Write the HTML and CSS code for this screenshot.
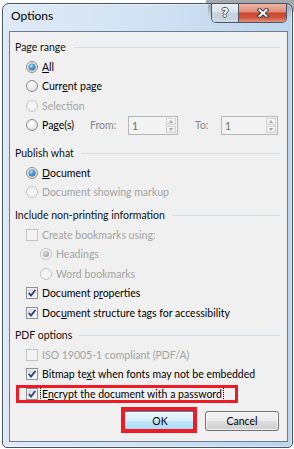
FILE: index.html
```html
<!DOCTYPE html>
<html>
<head>
<meta charset="utf-8">
<title>Options</title>
<link rel="stylesheet" href="styles.css">
</head>
<body>
<div class="window">
  <div class="titlebar">
    <span class="title">Options</span>
    <div class="caption">
      <span class="cbtn help">?</span>
      <span class="cbtn close"><svg width="12" height="10" viewBox="0 0 12 10"><path d="M2.5 2 L9.5 8 M9.5 2 L2.5 8" stroke="#3a3e44" stroke-width="4" stroke-linecap="square" fill="none"/><path d="M2.5 2 L9.5 8 M9.5 2 L2.5 8" stroke="#ffffff" stroke-width="2" stroke-linecap="square" fill="none"/></svg></span>
    </div>
  </div>
  <div class="client">
    <div class="heading h1"><span>Page range</span></div>
    <div class="row"><span class="radio on"></span><span class="lbl"><u>A</u>ll</span></div>
    <div class="row"><span class="radio"></span><span class="lbl">Curr<u>e</u>nt page</span></div>
    <div class="row dis"><span class="radio"></span><span class="lbl">Selection</span></div>
    <div class="row"><span class="radio"></span><span class="lbl pages">Pa<u>g</u>e(s)</span>
      <span class="flbl from">From:</span>
      <span class="spin s1"><span class="val">1</span><span class="arrows"><span class="arr up"></span><span class="arr dn"></span></span></span>
      <span class="flbl to">To:</span>
      <span class="spin s2"><span class="val">1</span><span class="arrows"><span class="arr up"></span><span class="arr dn"></span></span></span>
    </div>

    <div class="heading h2"><span>Publish what</span></div>
    <div class="row"><span class="radio on"></span><span class="lbl"><u>D</u>ocument</span></div>
    <div class="row dis"><span class="radio"></span><span class="lbl">Document showing markup</span></div>

    <div class="heading h3"><span>Include non-printing information</span></div>
    <div class="row dis"><span class="cb"></span><span class="lbl">Create bookmarks using:</span></div>
    <div class="row dis sub"><span class="radio on"></span><span class="lbl">Headings</span></div>
    <div class="row dis sub"><span class="radio"></span><span class="lbl">Word bookmarks</span></div>
    <div class="row"><span class="cb on"><svg width="10" height="10" viewBox="0 0 10 10"><path d="M1.8 5 L4 7.6 L8.4 2" stroke="#2c4285" stroke-width="1.9" fill="none"/></svg></span><span class="lbl">Document p<u>r</u>operties</span></div>
    <div class="row"><span class="cb on"><svg width="10" height="10" viewBox="0 0 10 10"><path d="M1.8 5 L4 7.6 L8.4 2" stroke="#2c4285" stroke-width="1.9" fill="none"/></svg></span><span class="lbl">Doc<u>u</u>ment structure tags for accessibility</span></div>

    <div class="heading h4"><span>PDF options</span></div>
    <div class="row dis"><span class="cb"></span><span class="lbl">ISO 19005-1 compliant (PDF/A)</span></div>
    <div class="row"><span class="cb on"><svg width="10" height="10" viewBox="0 0 10 10"><path d="M1.8 5 L4 7.6 L8.4 2" stroke="#2c4285" stroke-width="1.9" fill="none"/></svg></span><span class="lbl">Bitmap te<u>x</u>t when fonts may not be embedded</span></div>
    <div class="row enc"><span class="cb on"><svg width="10" height="10" viewBox="0 0 10 10"><path d="M1.8 5 L4 7.6 L8.4 2" stroke="#2c4285" stroke-width="1.9" fill="none"/></svg></span><span class="lbl focus">E<u>n</u>crypt the document with a password</span><span class="annot annot-row"></span></div>

    <div class="buttons">
      <span class="btn ok">OK<span class="annot annot-ok"></span></span>
      <span class="btn">Cancel</span>
    </div>
  </div>
</div>
</body>
</html>
```
FILE: styles.css
```css
* { box-sizing: border-box; }
html, body { margin: 0; padding: 0; }
body {
  width: 294px;
  height: 449px;
  overflow: hidden;
  background: linear-gradient(#a6aaae, #a6aaae) no-repeat 206px 0 / 88px 12px, #ffffff;
  font-family: Lato, "Liberation Sans", sans-serif;
  font-size: 10.5px;
  color: #000;
}
.window {
  margin: 3px 0 0 2px;
  width: 291px;
  height: 445px;
  border: 1px solid #46525e;
  border-radius: 7px 7px 5px 5px;
  background:
    linear-gradient(to bottom, rgba(152, 158, 164, 0.9), rgba(152, 158, 164, 0)) no-repeat right top / 84px 14px,
    linear-gradient(to right, #dfeaf6 0%, #d3e3f3 45%, #bdd4ec 100%);
  box-shadow: inset 0 0 0 1px rgba(255, 255, 255, 0.45);
  display: flex;
  flex-direction: column;
}
.titlebar {
  height: 27px;
  flex: none;
  display: flex;
  justify-content: space-between;
  align-items: flex-start;
  padding: 0 5px 0 8px;
}
.title {
  padding-top: 4px;
  font-size: 12px;
  line-height: 16px;
  color: #000;
}
.caption {
  display: flex;
  height: 19px;
  width: 76px;
  border: 1px solid #4a5663;
  border-top: none;
  border-radius: 0 0 5px 5px;
  overflow: hidden;
}
.cbtn {
  display: flex;
  align-items: center;
  justify-content: center;
  height: 100%;
}
.help {
  width: 27px;
  border-right: 1px solid #4a5663;
  background: linear-gradient(#eaf0f6 0%, #d9e2eb 45%, #c3d0dd 50%, #cdd9e5 100%);
  font: bold 12px "DejaVu Sans", sans-serif;
  color: #fff;
  text-shadow: 1px 0 #4b5561, -1px 0 #4b5561, 0 1px #4b5561, 0 -1px #4b5561;
}
.close {
  flex: 1;
  background: linear-gradient(#efb6a9 0%, #e08b78 45%, #c8452e 50%, #cf553b 75%, #e4937c 100%);
}
.client {
  flex: 1;
  margin: 0 4px 5px 6px;
  border: 1px solid #6e7b88;
  background: #f0f0f0;
  padding: 0 7px 0 5px;
  display: flex;
  flex-direction: column;
}
.heading {
  height: 20px;
  display: flex;
  align-items: center;
  color: #111;
}
.heading::after {
  content: "";
  flex: 1;
  height: 1px;
  margin-left: 7px;
  background: #d5dfe5;
}
.h1 { margin-top: 5px; }
.h2 { margin-top: 8px; }
.h3 { margin-top: 3px; }
.h4 { margin-top: 2.5px; }
.row {
  height: 19.5px;
  display: flex;
  align-items: center;
  padding-left: 11px;
  position: relative;
}
.row.sub { padding-left: 25px; }
.lbl { margin-left: 4px; }
.dis .lbl { color: #a3a3a3; }
u { text-decoration: underline; text-underline-offset: 1px; }
.radio {
  width: 12px;
  height: 12px;
  border-radius: 50%;
  border: 1px solid #8c8e90;
  background: radial-gradient(circle at 40% 35%, #ffffff 0%, #eeeeee 45%, #cfd1d3 100%);
  display: flex;
  align-items: center;
  justify-content: center;
  flex: none;
}
.radio.on::after {
  content: "";
  width: 6px;
  height: 6px;
  border-radius: 50%;
  background: radial-gradient(circle at 40% 35%, #bfe6fb 0%, #3d9ad6 45%, #0e4f86 100%);
  box-shadow: 0 0 0 0.5px #1d5a8c;
}
.dis .radio {
  border-color: #c2c4c6;
  background: #f4f4f4;
}
.dis .radio.on::after {
  background: radial-gradient(circle at 40% 35%, #e4e4e4 0%, #a8a8a8 60%, #8a8a8a 100%);
  box-shadow: none;
}
.cb {
  width: 12px;
  height: 12px;
  border: 1px solid #8c8e90;
  background: linear-gradient(135deg, #c9ced4 0%, #eceef0 60%, #fafafa 100%);
  box-shadow: inset 0 0 0 1px #f6f6f6;
  display: flex;
  align-items: center;
  justify-content: center;
  flex: none;
}
.dis .cb {
  border-color: #c2c4c6;
  background: #f4f4f4;
  box-shadow: none;
}
.pages { width: 48px; }
.flbl { color: #868686; }
.from { width: 38px; }
.to { width: 26px; margin-left: 17px; }
.spin {
  display: flex;
  height: 19px;
  border: 1px solid #b3b8bc;
  background: #f3f3f3;
}
.s1 { width: 50px; }
.s2 { width: 57px; }
.val {
  flex: 1;
  padding-left: 3px;
  line-height: 18px;
  color: #6d6d6d;
}
.arrows {
  width: 11px;
  display: flex;
  flex-direction: column;
  padding: 1px 1px 1px 0;
  gap: 1px;
}
.arr {
  flex: 1;
  border: 1px solid #d3d3d3;
  background: linear-gradient(#f7f7f7, #e9e9e9);
  display: flex;
  align-items: center;
  justify-content: center;
}
.arr::after {
  content: "";
  border-left: 2.5px solid transparent;
  border-right: 2.5px solid transparent;
}
.up::after { border-bottom: 3px solid #a6a6a6; }
.dn::after { border-top: 3px solid #a6a6a6; }
.focus {
  margin-left: 2px;
  padding: 0 1px;
  border: 1px dotted #000;
  line-height: 12px;
}
.annot {
  position: absolute;
  border-style: solid;
  border-color: #ed1c24;
  pointer-events: none;
}
.annot-row {
  left: 1px;
  top: 1px;
  width: 222px;
  height: 18px;
  border-width: 3px;
}
.buttons {
  margin-top: 7.5px;
  display: flex;
  justify-content: flex-end;
  gap: 8px;
  padding-right: 1px;
}
.btn {
  position: relative;
  width: 74px;
  height: 20px;
  border: 1px solid #707070;
  border-radius: 3px;
  background: linear-gradient(#f2f2f2 0%, #ebebeb 50%, #dddddd 50%, #cfcfcf 100%);
  box-shadow: inset 0 0 0 1px rgba(255, 255, 255, 0.7);
  display: flex;
  align-items: center;
  justify-content: center;
}
.btn.ok {
  border-color: #3c7fb1;
  background: linear-gradient(#eaf6fd 0%, #d9f0fc 50%, #bee6fd 50%, #a7d9f5 100%);
}
.annot-ok {
  left: -3px;
  top: -5px;
  width: 76px;
  height: 26px;
  border-width: 4px;
}
```
